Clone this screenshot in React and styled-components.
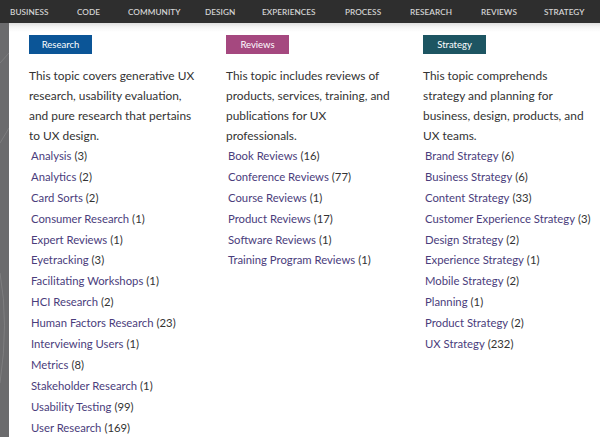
import React from "react";
import styled, { createGlobalStyle } from "styled-components";

const Global = createGlobalStyle`
  html, body { margin: 0; padding: 0; background: #fff; }
  body { font-family: "Lato", "Open Sans", Arial, sans-serif; width: 600px; height: 437px; overflow: hidden; }
`;

const Nav = styled.nav`
  height: 23px;
  background: #2e2e2e;
  position: relative;
  z-index: 2;
`;

const NavItem = styled.span`
  position: absolute;
  left: ${(p) => p.x}px;
  top: 7px;
  font-family: "Lato", Arial, sans-serif;
  font-size: 8.2px;
  font-weight: 600;
  letter-spacing: 0.05px;
  color: #d4d4d4;
  text-transform: uppercase;
`;

const Page = styled.div`
  display: flex;
  height: 414px;
`;

const Strip = styled.div`
  width: 9px;
  flex: none;
  background: #6b6b6d;
  position: relative;
  overflow: hidden;
`;

const Main = styled.main`
  flex: 1;
  background: linear-gradient(#dedede 0px, #f3f3f3 4px, #fff 9px);
  padding: 12px 0 0 20px;
  display: grid;
  grid-template-columns: 197px 197px 197px;
  align-content: start;
`;

const Column = styled.section`
  display: flex;
  flex-direction: column;
`;

const Badge = styled.div`
  width: 63px;
  height: 19px;
  background: ${(p) => p.color};
  color: #fff;
  font-size: 9.5px;
  display: flex;
  align-items: center;
  justify-content: center;
`;

const Desc = styled.p`
  margin: 12px 0 -1px;
  font-size: 11.9px;
  line-height: 20px;
  color: #333;
  width: 166px;
`;

const List = styled.ul`
  list-style: none;
  margin: 0;
  padding: 0 0 0 2px;
`;

const Item = styled.li`
  height: 20.9px;
  display: flex;
  align-items: center;
  font-size: 11.3px;
  color: #4a3d7c;
  white-space: nowrap;
`;

const Count = styled.span`
  color: #333;
  margin-left: 3px;
`;

const navItems = [
  ["Business", 10],
  ["Code", 77],
  ["Community", 128],
  ["Design", 205],
  ["Experiences", 262],
  ["Process", 345],
  ["Research", 410],
  ["Reviews", 481],
  ["Strategy", 544],
];

const columns = [
  {
    title: "Research",
    color: "#0b5597",
    desc: "This topic covers generative UX research, usability evaluation, and pure research that pertains to UX design.",
    items: [
      ["Analysis", 3],
      ["Analytics", 2],
      ["Card Sorts", 2],
      ["Consumer Research", 1],
      ["Expert Reviews", 1],
      ["Eyetracking", 3],
      ["Facilitating Workshops", 1],
      ["HCI Research", 2],
      ["Human Factors Research", 23],
      ["Interviewing Users", 1],
      ["Metrics", 8],
      ["Stakeholder Research", 1],
      ["Usability Testing", 99],
      ["User Research", 169],
    ],
  },
  {
    title: "Reviews",
    color: "#a5487f",
    desc: "This topic includes reviews of products, services, training, and publications for UX professionals.",
    items: [
      ["Book Reviews", 16],
      ["Conference Reviews", 77],
      ["Course Reviews", 1],
      ["Product Reviews", 17],
      ["Software Reviews", 1],
      ["Training Program Reviews", 1],
    ],
  },
  {
    title: "Strategy",
    color: "#1d5562",
    desc: "This topic comprehends strategy and planning for business, design, products, and UX teams.",
    items: [
      ["Brand Strategy", 6],
      ["Business Strategy", 6],
      ["Content Strategy", 33],
      ["Customer Experience Strategy", 3],
      ["Design Strategy", 2],
      ["Experience Strategy", 1],
      ["Mobile Strategy", 2],
      ["Planning", 1],
      ["Product Strategy", 2],
      ["UX Strategy", 232],
    ],
  },
];

export default function App() {
  return (
    <>
      <Global />
      <Nav>
        {navItems.map(([t, x]) => (
          <NavItem key={t} x={x}>{t}</NavItem>
        ))}
      </Nav>
      <Page>
        <Strip>
          <svg width="9" height="414" style={{ position: "absolute", left: 0, top: 0 }}>
            <path d="M0 40 L9 30 M0 120 L9 105 M0 250 Q9 300 0 360" stroke="#858587" strokeWidth="0.7" fill="none" />
          </svg>
        </Strip>
        <Main>
          {columns.map((c) => (
            <Column key={c.title}>
              <Badge color={c.color}>{c.title}</Badge>
              <Desc>{c.desc}</Desc>
              <List>
                {c.items.map(([n, k]) => (
                  <Item key={n}>
                    {n}
                    <Count>({k})</Count>
                  </Item>
                ))}
              </List>
            </Column>
          ))}
        </Main>
      </Page>
    </>
  );
}
